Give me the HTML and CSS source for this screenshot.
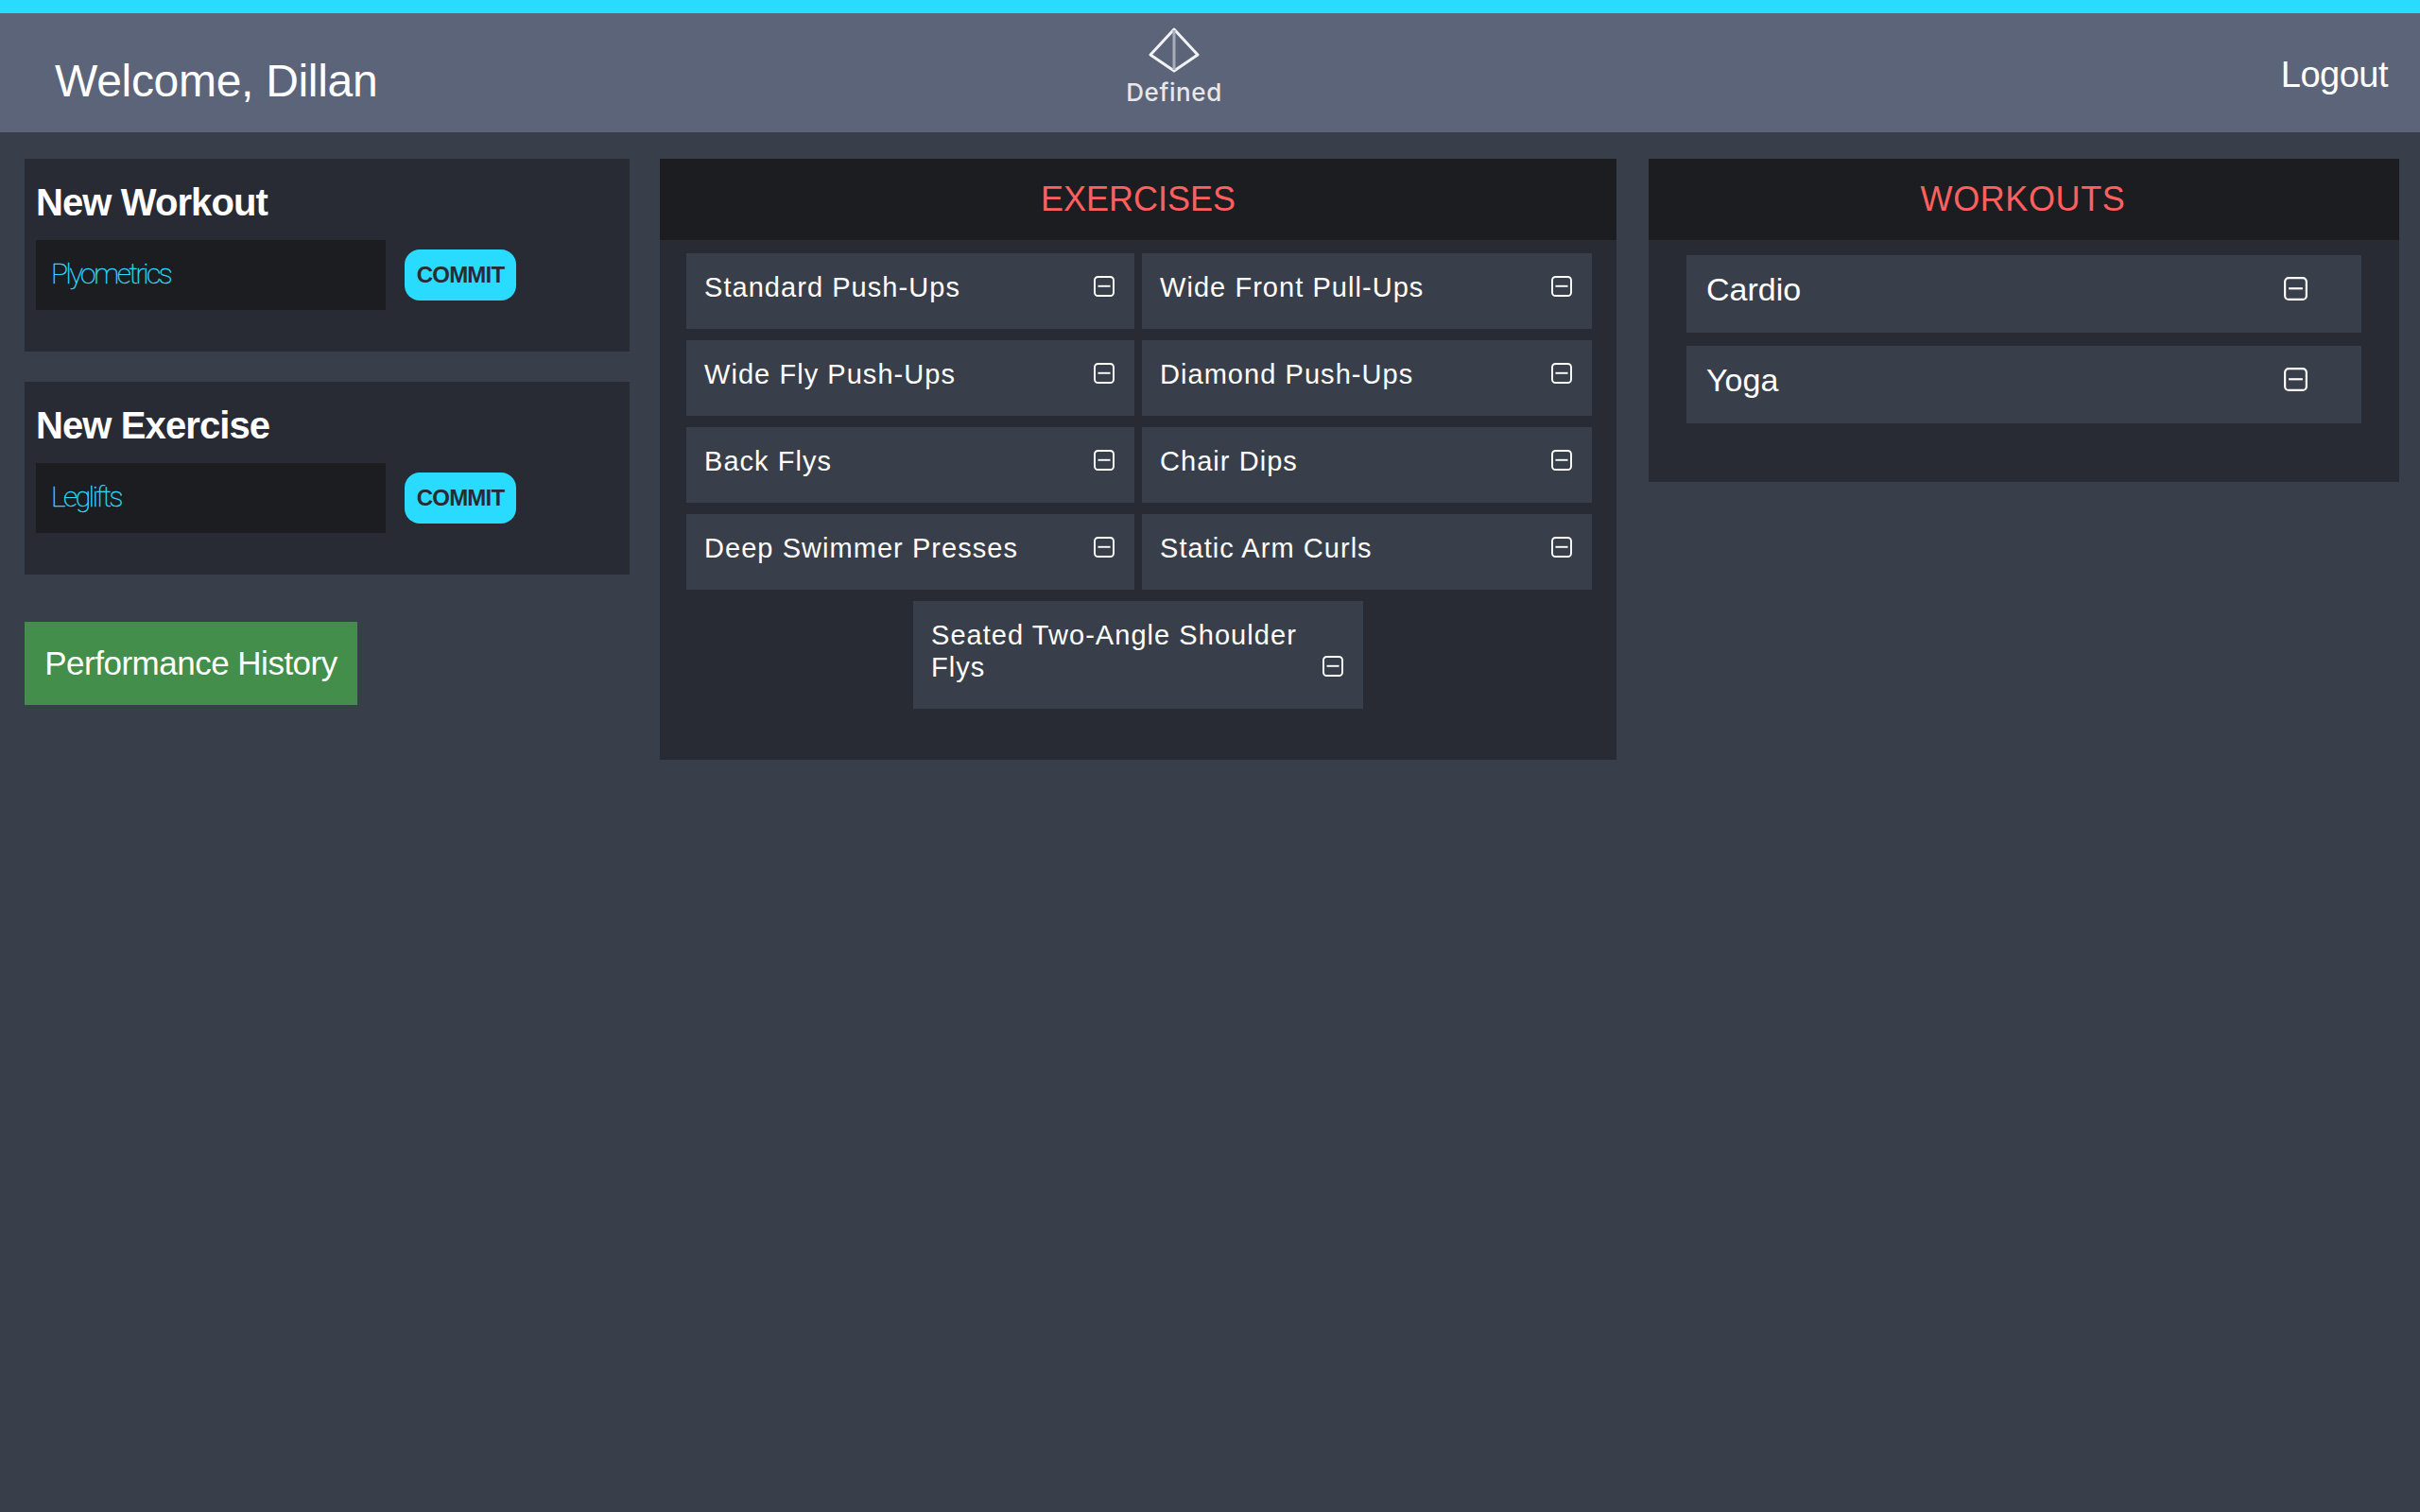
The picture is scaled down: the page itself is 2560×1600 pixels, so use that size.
FILE: index.html
```html
<!DOCTYPE html>
<html lang="en">
<head>
    <meta charset="UTF-8">
    <meta name="viewport" content="width=device-width, initial-scale=1.0">
    <title>Defined</title>
    <link rel="stylesheet" href="styles.css">
</head>
<body>
    <svg class="icon-defs" width="0" height="0">
        <symbol id="minus-box" viewBox="0 0 22 22">
            <rect x="1" y="1" width="20" height="20" rx="3.5" fill="none" stroke="currentColor" stroke-width="1.9"/>
            <line x1="4.5" y1="10.8" x2="17.5" y2="10.8" stroke="currentColor" stroke-width="1.9"/>
        </symbol>
    </svg>

    <header class="topbar">
        <h1 class="welcome">Welcome, Dillan</h1>
        <div class="logo">
            <svg class="logo-mark" width="54" height="48" viewBox="0 0 54 48">
                <path d="M27 2 L52 29 L27 46 L2 29 Z" fill="none" stroke="#f2f3f5" stroke-width="3" stroke-linejoin="round"/>
                <line x1="27" y1="3" x2="27" y2="45" stroke="#a9adb9" stroke-width="3"/>
            </svg>
            <span class="logo-name">Defined</span>
        </div>
        <a class="logout" href="#">Logout</a>
    </header>

    <main class="layout">
        <section class="sidebar">
            <form class="new-form">
                <h2>New Workout</h2>
                <div class="new-row">
                    <input class="new-input" type="text" placeholder="Plyometrics">
                    <button class="commit" type="button">COMMIT</button>
                </div>
            </form>
            <form class="new-form">
                <h2>New Exercise</h2>
                <div class="new-row">
                    <input class="new-input" type="text" placeholder="Leglifts">
                    <button class="commit" type="button">COMMIT</button>
                </div>
            </form>
            <button class="history" type="button">Performance History</button>
        </section>

        <section class="panel exercises">
            <h2 class="panel-title">EXERCISES</h2>
            <ul class="exercise-list">
                <li class="exercise"><span>Standard Push-Ups</span><svg class="remove"><use href="#minus-box"/></svg></li>
                <li class="exercise"><span>Wide Front Pull-Ups</span><svg class="remove"><use href="#minus-box"/></svg></li>
                <li class="exercise"><span>Wide Fly Push-Ups</span><svg class="remove"><use href="#minus-box"/></svg></li>
                <li class="exercise"><span>Diamond Push-Ups</span><svg class="remove"><use href="#minus-box"/></svg></li>
                <li class="exercise"><span>Back Flys</span><svg class="remove"><use href="#minus-box"/></svg></li>
                <li class="exercise"><span>Chair Dips</span><svg class="remove"><use href="#minus-box"/></svg></li>
                <li class="exercise"><span>Deep Swimmer Presses</span><svg class="remove"><use href="#minus-box"/></svg></li>
                <li class="exercise"><span>Static Arm Curls</span><svg class="remove"><use href="#minus-box"/></svg></li>
                <li class="exercise exercise-last"><span>Seated Two-Angle Shoulder Flys</span><svg class="remove"><use href="#minus-box"/></svg></li>
            </ul>
        </section>

        <section class="panel workouts">
            <h2 class="panel-title">WORKOUTS</h2>
            <ul class="workout-list">
                <li class="workout"><span>Cardio</span><svg class="remove-large"><use href="#minus-box"/></svg></li>
                <li class="workout"><span>Yoga</span><svg class="remove-large"><use href="#minus-box"/></svg></li>
            </ul>
        </section>
    </main>
</body>
</html>
```

FILE: styles.css
```css
* {
    box-sizing: border-box;
}

body {
    margin: 0;
    min-height: 1600px;
    background-color: #393f4a;
    color: #fff;
    font-family: "Liberation Sans", Arial, sans-serif;
}

.icon-defs {
    position: absolute;
}

ul {
    list-style: none;
    margin: 0;
    padding: 0;
}

/* Top bar */
.topbar {
    display: grid;
    grid-template-columns: 1190px 104px 1fr;
    height: 140px;
    border-top: 14px solid #29dcff;
    background-color: #5c6479;
}

.welcome {
    margin: 44px 0 0 58px;
    font-size: 48px;
    font-weight: 400;
    line-height: 56px;
    letter-spacing: -0.3px;
}

.logo {
    display: flex;
    flex-direction: column;
    align-items: center;
    padding-top: 15px;
}

.logo-mark {
    display: block;
}

.logo-name {
    margin-top: 6px;
    font-family: "Inter", sans-serif;
    font-size: 26px;
    font-weight: 500;
    line-height: 30px;
    letter-spacing: 0.6px;
    color: #e6e8ec;
}

.logout {
    justify-self: end;
    margin: 43px 34px 0 0;
    font-size: 38px;
    line-height: 44px;
    letter-spacing: -0.5px;
    color: #fff;
    text-decoration: none;
}

/* Columns */
.layout {
    display: grid;
    grid-template-columns: 640px 1012px 796px;
    column-gap: 32px;
    align-items: start;
    padding: 28px 22px 0 26px;
}

.workouts {
    margin-left: 2px;
}

/* Left column */
.new-form {
    height: 204px;
    margin-bottom: 32px;
    padding: 22px 12px 0;
    background-color: #282b33;
}

.new-form h2 {
    margin: 0 0 16px;
    font-size: 40px;
    line-height: 48px;
    letter-spacing: -0.9px;
}

.new-row {
    display: flex;
    align-items: center;
}

.new-input {
    width: 370px;
    height: 74px;
    padding: 0 16px 3px;
    border: none;
    border-radius: 0;
    background-color: #1c1d21;
    color: #29dcff;
    font-family: "Roboto", sans-serif;
    font-size: 30px;
    font-weight: 100;
    letter-spacing: -2.4px;
    -webkit-text-stroke: 0.4px #29dcff;
}

.new-input::placeholder {
    color: #29dcff;
    opacity: 1;
}

.commit {
    width: 118px;
    height: 54px;
    margin-left: 20px;
    padding: 0;
    border: none;
    border-radius: 16px;
    background-color: #29dcff;
    color: #282b33;
    font-family: "Liberation Sans", Arial, sans-serif;
    font-size: 24px;
    font-weight: 700;
    letter-spacing: -0.8px;
}

.history {
    display: block;
    width: 352px;
    height: 88px;
    margin-top: 50px;
    padding: 0;
    border: none;
    background-color: #428e4a;
    color: #fff;
    font-family: "Liberation Sans", Arial, sans-serif;
    font-size: 35px;
    letter-spacing: -0.5px;
}

/* Panels */
.panel {
    background-color: #282b33;
}

.panel-title {
    height: 86px;
    margin: 0;
    background-color: #1c1d21;
    color: #ff5f5f;
    font-size: 36px;
    font-weight: 400;
    line-height: 86px;
    text-align: center;
}

.workouts .panel-title {
    padding-right: 2px;
    letter-spacing: 0.6px;
}

.exercise-list {
    display: grid;
    grid-template-columns: 474px 476px;
    gap: 12px 8px;
    padding: 14px 26px 54px 28px;
}

.exercise {
    display: flex;
    justify-content: space-between;
    align-items: flex-end;
    padding: 19px 21px 27px 19px;
    background-color: #393f4a;
    font-size: 29px;
    line-height: 34px;
    letter-spacing: 1.05px;
}

.exercise-last {
    grid-column: span 2;
    width: 476px;
    margin-left: 240px;
}

.remove {
    flex: none;
    width: 22px;
    height: 22px;
    margin: 0 0 7px 20px;
}

.workout-list {
    display: flex;
    flex-direction: column;
    gap: 14px;
    padding: 16px 40px 62px;
}

.workout {
    display: flex;
    justify-content: space-between;
    align-items: flex-start;
    height: 82px;
    padding: 16px 57px 0 21px;
    background-color: #393f4a;
    font-size: 34px;
    line-height: 40px;
}

.remove-large {
    flex: none;
    width: 25px;
    height: 25px;
    margin-top: 7px;
}
```
